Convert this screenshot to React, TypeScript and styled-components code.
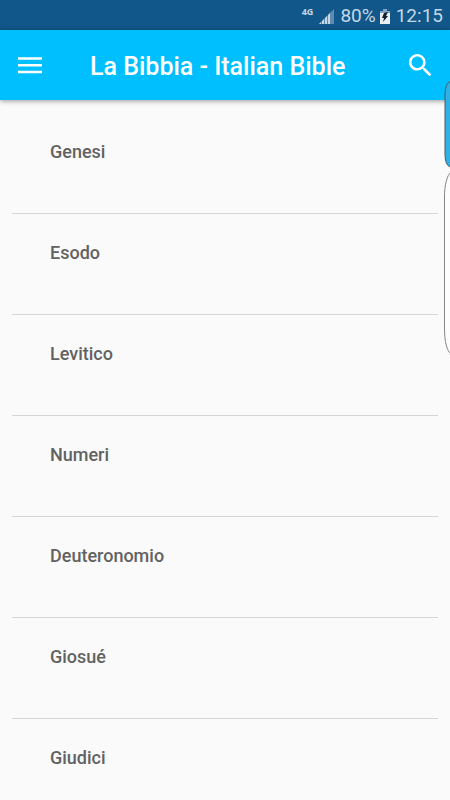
import React from "react";
import styled, { createGlobalStyle } from "styled-components";

const GlobalStyle = createGlobalStyle`
  * { box-sizing: border-box; }
  body {
    margin: 0;
    background: #fafafa;
    font-family: Roboto, "Liberation Sans", sans-serif;
    overflow-x: hidden;
  }
`;

const Screen = styled.div`
  position: relative;
  height: 100vh;
  display: flex;
  flex-direction: column;
  overflow: hidden;
  background: #fafafa;
`;

const StatusBar = styled.div`
  flex: none;
  height: 30px;
  padding: 2px 7px 0 0;
  display: flex;
  align-items: center;
  justify-content: flex-end;
  gap: 6px;
  background: #115789;
  color: #c3d7e8;
  font-size: 19px;
  line-height: 28px;
`;

const Network = styled.span`
  align-self: flex-start;
  font-family: "Open Sans", sans-serif;
  font-size: 9px;
  font-weight: 700;
  line-height: 20px;
`;

const Battery = styled.span`
  display: flex;
  align-items: center;
  gap: 4px;
`;

const AppBar = styled.header`
  flex: none;
  height: 70px;
  padding: 0 18px;
  display: flex;
  align-items: center;
  background: #00bfff;
  color: #fff;
  box-shadow: 0 1px 5px rgba(0, 0, 0, 0.4);
  z-index: 1;
`;

const IconButton = styled.button`
  display: flex;
  padding: 0;
  border: 0;
  background: none;
  color: inherit;
  cursor: pointer;
`;

const Title = styled.h1`
  flex: 1;
  margin: 0 0 0 48px;
  padding-top: 3px;
  font-size: 25px;
  font-weight: 500;
  line-height: 32px;
  white-space: nowrap;
`;

const BookList = styled.ul`
  flex: 1;
  min-height: 0;
  margin: 0;
  padding: 13px 12px 0;
  list-style: none;
  overflow: hidden;
`;

const BookLink = styled.a`
  display: block;
  height: 101px;
  padding: 29px 38px 0;
  border-bottom: 1px solid #d6d6d6;
  color: #626262;
  font-size: 18px;
  font-weight: 500;
  line-height: 20px;
  text-decoration: none;
`;

const EdgeHandles = styled.svg`
  position: absolute;
  top: 80px;
  right: 0;
  z-index: 2;
  pointer-events: none;
`;

const books = ["Genesi", "Esodo", "Levitico", "Numeri", "Deuteronomio", "Giosué", "Giudici"];

const SignalIcon = () => (
  <svg width="15" height="15" viewBox="0 0 15 15" aria-hidden="true">
    <path d="M15 0V15H0Z" fill="#5d8cb0" />
    <path d="M0 15L2 13V15ZM3 12L5 10V15H3ZM6 9L8 7V15H6ZM9 6L11 4V15H9Z" fill="#c3d7e8" />
  </svg>
);

const BatteryIcon = () => (
  <svg width="10" height="15" viewBox="0 0 10 15" aria-hidden="true">
    <path d="M3 0H7V2H10V5H0V2H3Z" fill="#7fa5c3" />
    <path d="M0 4H10V15H0Z" fill="#e8f0f6" />
    <path d="M4 4L8 3L6 7H8L3 13L4 9H2Z" fill="#10202d" />
  </svg>
);

const MenuIcon = () => (
  <svg width="24" height="17" viewBox="0 0 24 17" aria-hidden="true">
    <path d="M0 0.2H24V2.7H0ZM0 7H24V9.5H0ZM0 13.8H24V16.3H0Z" fill="currentColor" />
  </svg>
);

const SearchIcon = () => (
  <svg width="23" height="23" viewBox="3 3 18 18" aria-hidden="true">
    <path
      d="M15.5 14h-.79l-.28-.27C15.41 12.59 16 11.11 16 9.5 16 5.91 13.09 3 9.5 3S3 5.91 3 9.5 5.91 16 9.5 16c1.61 0 3.09-.59 4.23-1.57l.27.28v.79l5 4.99L20.49 19l-4.99-5zm-6 0C7.01 14 5 11.99 5 9.5S7.01 5 9.5 5 14 7.01 14 9.5 11.99 14 9.5 14z"
      fill="currentColor"
    />
  </svg>
);

export default function App() {
  return (
    <>
      <GlobalStyle />
      <Screen>
        <StatusBar>
          <Network>4G</Network>
          <SignalIcon />
          <Battery>
            80%
            <BatteryIcon />
          </Battery>
          <time>12:15</time>
        </StatusBar>
        <AppBar>
          <IconButton type="button" aria-label="Menu">
            <MenuIcon />
          </IconButton>
          <Title>La Bibbia - Italian Bible</Title>
          <IconButton type="button" aria-label="Cerca">
            <SearchIcon />
          </IconButton>
        </AppBar>
        <BookList>
          {books.map((book) => (
            <li key={book}>
              <BookLink href={`#${book}`}>{book}</BookLink>
            </li>
          ))}
        </BookList>
        <EdgeHandles width="6" height="280" viewBox="0 0 6 280" aria-hidden="true">
          <path d="M7 1Q1 3 1 15V74Q1 85 6 87H7Z" fill="#2fb1e6" stroke="#465b66" strokeWidth="1" />
          <path
            d="M7 92C3 95 .5 106 .5 116V248C.5 262 3 271 7 274Z"
            fill="#fdfdfd"
            stroke="#858585"
            strokeWidth="1"
          />
        </EdgeHandles>
      </Screen>
    </>
  );
}
